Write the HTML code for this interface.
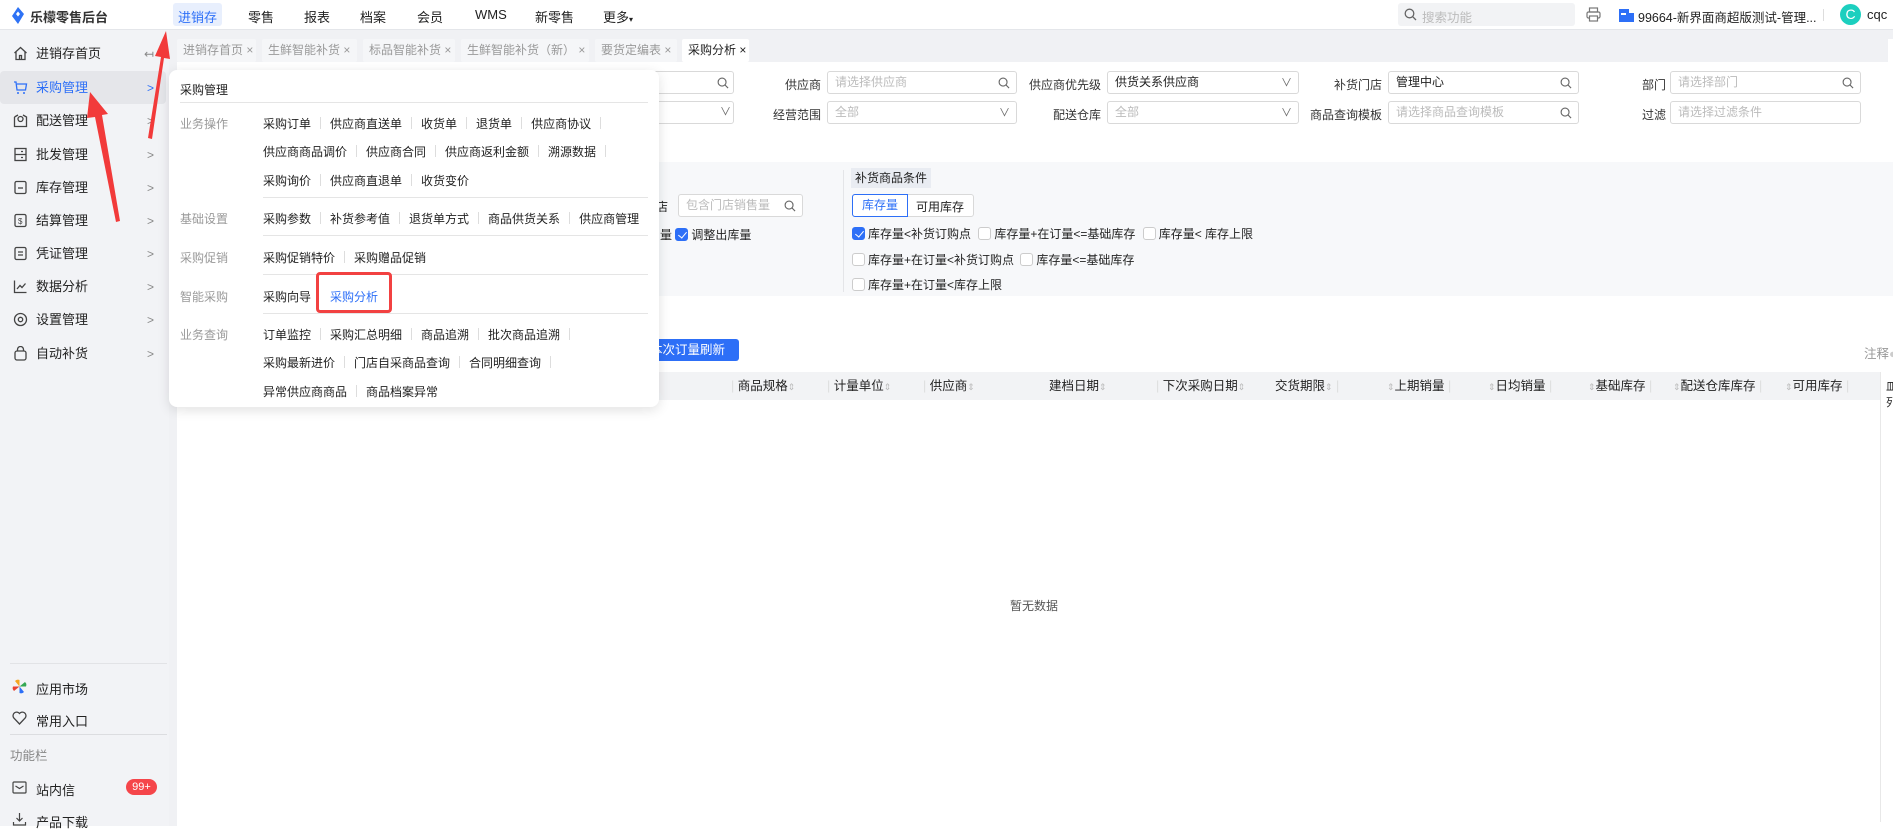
<!DOCTYPE html>
<html><head><meta charset="utf-8">
<style>
*{margin:0;padding:0;box-sizing:border-box}
body{width:1893px;height:826px;overflow:hidden;position:relative;background:#fff;font-family:"Liberation Sans","Noto Sans CJK SC",sans-serif;font-size:13px;color:#222}
.a{position:absolute;white-space:nowrap}
.hdr{left:0;top:0;width:1893px;height:30px;background:#fff;border-bottom:1px solid #e4e6ea}
.side{left:0;top:30px;width:169px;height:796px;background:#f2f3f6}
.si{left:0;width:169px;height:32px;line-height:32px}
.si .t{position:absolute;left:36px}
.si .ar{position:absolute;left:147px;color:#888;font-size:12px}
.ic{position:absolute;left:13px;top:8px;width:15px;height:15px}
.gray{left:169px;top:30px;width:1724px;height:796px;background:#f0f1f4}
.tab{top:39px;height:23px;line-height:23px;padding-left:6px;background:#f5f6f8;color:#999;font-size:12px;border-radius:2px}
.lbl{font-size:12px;color:#333;text-align:right}
.inp{height:23px;border:1px solid #d9d9d9;border-radius:3px;background:#fff;font-size:12px;color:#bbb;line-height:21px;padding-left:7px}
.inp.v{color:#222}
.mi{font-size:12px;color:#222}
.cat{font-size:12px;color:#999}
.sep{display:inline-block;width:1px;height:12px;background:#ddd;margin:0 9px;vertical-align:-1px}
.cb{display:inline-block;width:13px;height:13px;border:1px solid #ccc;border-radius:3px;background:#fff;vertical-align:-2px;margin-right:3px}
.cb.on{background:#2d6ff7;border-color:#2d6ff7;position:relative}
.cb.on:after{content:"";position:absolute;left:3.5px;top:0.5px;width:4px;height:7px;border:solid #fff;border-width:0 1.5px 1.5px 0;transform:rotate(40deg)}
.th{top:372px;height:28px;line-height:28px;font-size:12.5px;color:#222}
.srt{color:#bbb;font-size:9px}
</style></head><body>

<div class="a hdr"></div>
<svg class="a" style="left:11px;top:7px" width="14" height="17" viewBox="0 0 14 17"><path d="M7 0 L13 7 L9 7 L7 4.5 L5 7 L7 9.5 L9 7 L13 7 L7 17 L1 9 Z" fill="#2e72f5"/></svg>
<div class="a" style="left:30px;top:7px;font-size:13px;font-weight:bold;color:#333">乐檬零售后台</div>
<div class="a" style="left:173px;top:3px;width:49px;height:23px;background:#e8effd;border-radius:3px"></div>
<div class="a" style="left:178px;top:7px;color:#2d6ff7;font-size:13px">进销存</div>
<div class="a" style="left:248px;top:7px">零售</div>
<div class="a" style="left:304px;top:7px">报表</div>
<div class="a" style="left:360px;top:7px">档案</div>
<div class="a" style="left:417px;top:7px">会员</div>
<div class="a" style="left:475px;top:7px">WMS</div>
<div class="a" style="left:535px;top:7px">新零售</div>
<div class="a" style="left:603px;top:7px">更多<span style="font-size:8px">▾</span></div>

<div class="a" style="left:1398px;top:3px;width:177px;height:23px;background:#f2f3f5;border-radius:3px"></div>
<svg class="a" style="left:1404px;top:8px" width="13" height="13" viewBox="0 0 13 13"><circle cx="5.5" cy="5.5" r="4.3" fill="none" stroke="#666" stroke-width="1.3"/><path d="M8.7 8.7 L12 12" stroke="#666" stroke-width="1.3"/></svg>
<div class="a" style="left:1422px;top:7px;color:#bbb;font-size:12.5px">搜索功能</div>
<svg class="a" style="left:1586px;top:7px" width="15" height="15" viewBox="0 0 15 15"><rect x="3.5" y="1" width="8" height="4" fill="none" stroke="#777" stroke-width="1.2"/><rect x="1" y="5" width="13" height="6" rx="1.5" fill="none" stroke="#777" stroke-width="1.2"/><rect x="3.5" y="9" width="8" height="5" fill="#fff" stroke="#777" stroke-width="1.2"/></svg>
<svg class="a" style="left:1619px;top:9px" width="15" height="13" viewBox="0 0 15 13"><rect x="0" y="0" width="10" height="12" fill="#2d6ff7"/><rect x="10" y="4" width="5" height="8" fill="#2d6ff7"/><rect x="2" y="4" width="5" height="2" fill="#fff"/><rect x="0" y="11" width="15" height="2" fill="#2d6ff7"/></svg>
<div class="a" style="left:1638px;top:7px;font-size:12.5px">99664-新界面商超版测试-管理...</div>
<div class="a" style="left:1823px;top:9px;width:1px;height:12px;background:#ddd"></div>
<div class="a" style="left:1840px;top:4px;width:21px;height:21px;border-radius:50%;background:#1ccfbf;color:#fff;text-align:center;line-height:21px;font-size:14px">C</div>
<div class="a" style="left:1867px;top:7px;font-size:13px">cqc</div>

<div class="a gray"></div>
<div class="a side"></div>
<div class="a" style="left:0;top:71px;width:166px;height:33px;background:#e5e6ea;border-radius:4px"></div>

<div class="a si" style="top:38px"><svg class="ic" viewBox="0 0 15 15"><path d="M1.5 7 L7.5 1.5 L13.5 7 M3 5.8 V13.5 H12 V5.8 M6.5 13.5 V9.5 H8.5 V13.5" fill="none" stroke="#444" stroke-width="1.3"/></svg><span class="t">进销存首页</span><span class="ar" style="left:144px">↤</span></div>
<div class="a si" style="top:72px;color:#2d6ff7"><svg class="ic" viewBox="0 0 15 15"><path d="M1 2 H3 L4 10 H12.5 L13.5 4 H4" fill="none" stroke="#2d6ff7" stroke-width="1.3"/><circle cx="5" cy="13" r="1" fill="#2d6ff7"/><circle cx="11" cy="13" r="1" fill="#2d6ff7"/></svg><span class="t">采购管理</span><span class="ar" style="color:#2d6ff7">&gt;</span></div>
<div class="a si" style="top:105px"><svg class="ic" viewBox="0 0 15 15"><path d="M1.5 4 V13.5 H13.5 V4 L10 2 M5 2 L1.5 4" fill="none" stroke="#444" stroke-width="1.3"/><circle cx="7.5" cy="6" r="2.5" fill="none" stroke="#444" stroke-width="1.3"/></svg><span class="t">配送管理</span><span class="ar">&gt;</span></div>
<div class="a si" style="top:139px"><svg class="ic" viewBox="0 0 15 15"><rect x="2" y="1.5" width="11" height="12" fill="none" stroke="#444" stroke-width="1.3"/><path d="M2 7.5 H13 M8 4.5 H10 M8 10.5 H10" stroke="#444" stroke-width="1.3"/></svg><span class="t">批发管理</span><span class="ar">&gt;</span></div>
<div class="a si" style="top:172px"><svg class="ic" viewBox="0 0 15 15"><rect x="2" y="1.5" width="11" height="12" rx="1.5" fill="none" stroke="#444" stroke-width="1.3"/><path d="M5 8 H10" stroke="#444" stroke-width="1.3"/></svg><span class="t">库存管理</span><span class="ar">&gt;</span></div>
<div class="a si" style="top:205px"><svg class="ic" viewBox="0 0 15 15"><rect x="2" y="1.5" width="11" height="12" rx="1.5" fill="none" stroke="#444" stroke-width="1.3"/><text x="5" y="11" font-size="8" fill="#444">$</text></svg><span class="t">结算管理</span><span class="ar">&gt;</span></div>
<div class="a si" style="top:238px"><svg class="ic" viewBox="0 0 15 15"><rect x="2" y="1.5" width="11" height="12" rx="1.5" fill="none" stroke="#444" stroke-width="1.3"/><path d="M5 6 H10 M5 9 H10" stroke="#444" stroke-width="1.3"/></svg><span class="t">凭证管理</span><span class="ar">&gt;</span></div>
<div class="a si" style="top:271px"><svg class="ic" viewBox="0 0 15 15"><path d="M1.5 1.5 V13.5 H13.5 M4 10 L7 6.5 L9 8.5 L12.5 4.5" fill="none" stroke="#444" stroke-width="1.3"/></svg><span class="t">数据分析</span><span class="ar">&gt;</span></div>
<div class="a si" style="top:304px"><svg class="ic" viewBox="0 0 15 15"><circle cx="7.5" cy="7.5" r="6" fill="none" stroke="#444" stroke-width="1.3"/><circle cx="7.5" cy="7.5" r="2.2" fill="none" stroke="#444" stroke-width="1.3"/></svg><span class="t">设置管理</span><span class="ar">&gt;</span></div>
<div class="a si" style="top:338px"><svg class="ic" viewBox="0 0 15 15"><rect x="2" y="5" width="11" height="9" rx="2" fill="none" stroke="#444" stroke-width="1.3"/><path d="M4.5 5 V3.5 A3 3 0 0 1 10.5 3.5 V5" fill="none" stroke="#444" stroke-width="1.3"/></svg><span class="t">自动补货</span><span class="ar">&gt;</span></div>

<div class="a" style="left:10px;top:663px;width:157px;height:1px;background:#e2e3e6"></div>
<svg class="a" style="left:12px;top:679px" width="15" height="15" viewBox="0 0 15 15"><path d="M7.5 7.5 L3 2 A4 4 0 0 1 7.5 1 Z" fill="#f5a623"/><path d="M7.5 7.5 L13 3 A4 4 0 0 1 14 7.5 Z" fill="#34a853"/><path d="M7.5 7.5 L12 13 A4 4 0 0 1 7.5 14 Z" fill="#2d6ff7"/><path d="M7.5 7.5 L2 12 A4 4 0 0 1 1 7.5 Z" fill="#ea4335"/></svg>
<div class="a" style="left:36px;top:679px">应用市场</div>
<svg class="a" style="left:12px;top:711px" width="15" height="14" viewBox="0 0 15 14"><path d="M7.5 13 L1.8 7 A3.3 3.3 0 0 1 7.5 2.5 A3.3 3.3 0 0 1 13.2 7 Z" fill="none" stroke="#444" stroke-width="1.3"/></svg>
<div class="a" style="left:36px;top:711px">常用入口</div>
<div class="a" style="left:10px;top:734px;width:157px;height:1px;background:#dcdde0"></div>
<div class="a" style="left:10px;top:745px;color:#888;font-size:12.5px">功能栏</div>
<svg class="a" style="left:12px;top:781px" width="15" height="13" viewBox="0 0 15 13"><rect x="1" y="1" width="13" height="11" rx="1" fill="none" stroke="#444" stroke-width="1.2"/><path d="M3.5 5 L7.5 7.5 L11.5 5" fill="none" stroke="#444" stroke-width="1.2"/></svg>
<div class="a" style="left:36px;top:780px">站内信</div>
<div class="a" style="left:126px;top:779px;width:31px;height:16px;border-radius:8px;background:#f5454a;color:#fff;font-size:11px;text-align:center;line-height:16px">99+</div>
<svg class="a" style="left:12px;top:812px" width="15" height="14" viewBox="0 0 15 14"><path d="M7.5 1 V9 M4.5 6 L7.5 9 L10.5 6 M1.5 10 V13 H13.5 V10" fill="none" stroke="#444" stroke-width="1.2"/></svg>
<div class="a" style="left:36px;top:812px">产品下载</div>

<div class="a tab" style="left:177px;width:79px">进销存首页 ×</div>
<div class="a tab" style="left:262px;width:95px">生鲜智能补货 ×</div>
<div class="a tab" style="left:363px;width:92px">标品智能补货 ×</div>
<div class="a tab" style="left:461px;width:128px">生鲜智能补货（新） ×</div>
<div class="a tab" style="left:595px;width:82px">要货定编表 ×</div>
<div class="a tab" style="left:682px;width:67px;background:#fff;color:#222">采购分析 ×</div>
<div class="a" style="left:1888px;top:39px;width:5px;height:23px;background:#fff"></div>

<div class="a" style="left:177px;top:62px;width:1716px;height:764px;background:#fff"></div>

<div class="a inp" style="left:600px;top:71px;width:134px"></div>
<svg class="a" style="left:717px;top:77px" width="12" height="12" viewBox="0 0 13 13"><circle cx="5.5" cy="5.5" r="4.3" fill="none" stroke="#666" stroke-width="1.2"/><path d="M8.7 8.7 L12 12" stroke="#666" stroke-width="1.2"/></svg>
<div class="a inp" style="left:600px;top:101px;width:134px"></div>
<div class="a" style="left:720px;top:103px;color:#666;font-size:11px">∨</div>

<div class="a lbl" style="left:760px;top:76px;width:61px">供应商</div>
<div class="a inp" style="left:827px;top:71px;width:190px">请选择供应商</div>
<svg class="a" style="left:998px;top:77px" width="12" height="12" viewBox="0 0 13 13"><circle cx="5.5" cy="5.5" r="4.3" fill="none" stroke="#666" stroke-width="1.2"/><path d="M8.7 8.7 L12 12" stroke="#666" stroke-width="1.2"/></svg>
<div class="a lbl" style="left:1000px;top:76px;width:101px">供应商优先级</div>
<div class="a inp v" style="left:1107px;top:71px;width:192px">供货关系供应商</div>
<div class="a" style="left:1281px;top:74px;color:#666;font-size:11px">∨</div>
<div class="a lbl" style="left:1300px;top:76px;width:82px">补货门店</div>
<div class="a inp v" style="left:1388px;top:71px;width:191px">管理中心</div>
<svg class="a" style="left:1560px;top:77px" width="12" height="12" viewBox="0 0 13 13"><circle cx="5.5" cy="5.5" r="4.3" fill="none" stroke="#666" stroke-width="1.2"/><path d="M8.7 8.7 L12 12" stroke="#666" stroke-width="1.2"/></svg>
<div class="a lbl" style="left:1600px;top:76px;width:66px">部门</div>
<div class="a inp" style="left:1670px;top:71px;width:191px">请选择部门</div>
<svg class="a" style="left:1842px;top:77px" width="12" height="12" viewBox="0 0 13 13"><circle cx="5.5" cy="5.5" r="4.3" fill="none" stroke="#666" stroke-width="1.2"/><path d="M8.7 8.7 L12 12" stroke="#666" stroke-width="1.2"/></svg>

<div class="a lbl" style="left:760px;top:106px;width:61px">经营范围</div>
<div class="a inp" style="left:827px;top:101px;width:190px">全部</div>
<div class="a" style="left:999px;top:104px;color:#666;font-size:11px">∨</div>
<div class="a lbl" style="left:1000px;top:106px;width:101px">配送仓库</div>
<div class="a inp" style="left:1107px;top:101px;width:192px">全部</div>
<div class="a" style="left:1281px;top:104px;color:#666;font-size:11px">∨</div>
<div class="a lbl" style="left:1300px;top:106px;width:82px">商品查询模板</div>
<div class="a inp" style="left:1388px;top:101px;width:191px">请选择商品查询模板</div>
<svg class="a" style="left:1560px;top:107px" width="12" height="12" viewBox="0 0 13 13"><circle cx="5.5" cy="5.5" r="4.3" fill="none" stroke="#666" stroke-width="1.2"/><path d="M8.7 8.7 L12 12" stroke="#666" stroke-width="1.2"/></svg>
<div class="a lbl" style="left:1600px;top:106px;width:66px">过滤</div>
<div class="a inp" style="left:1670px;top:101px;width:191px">请选择过滤条件</div>

<div class="a" style="left:177px;top:162px;width:1716px;height:134px;background:#f7f8fa"></div>
<div class="a" style="left:843px;top:170px;width:1px;height:122px;background:#e4e5e8"></div>
<div class="a" style="left:851px;top:168px;height:20px;line-height:20px;padding:0 4px;background:#e9ecf2;font-size:12px">补货商品条件</div>
<div class="a" style="left:852px;top:194px;width:122px;height:23px;border:1px solid #d9d9d9;border-radius:3px;background:#fff"></div>
<div class="a" style="left:852px;top:194px;width:56px;height:23px;border:1px solid #2d6ff7;border-radius:3px 0 0 3px;color:#2d6ff7;text-align:center;line-height:21px;font-size:12px">库存量</div>
<div class="a" style="left:916px;top:198px;font-size:12px">可用库存</div>
<div class="a" style="left:852px;top:225px;font-size:12px"><span class="cb on"></span>库存量&lt;补货订购点 <span class="cb" style="margin-left:4px"></span>库存量+在订量&lt;=基础库存 <span class="cb" style="margin-left:4px"></span>库存量&lt; 库存上限</div>
<div class="a" style="left:852px;top:251px;font-size:12px"><span class="cb"></span>库存量+在订量&lt;补货订购点 <span class="cb" style="margin-left:3px"></span>库存量&lt;=基础库存</div>
<div class="a" style="left:852px;top:276px;font-size:12px"><span class="cb"></span>库存量+在订量&lt;库存上限</div>
<div class="a" style="left:656px;top:198px;font-size:12px">店</div>
<div class="a inp" style="left:678px;top:194px;width:125px">包含门店销售量</div>
<svg class="a" style="left:784px;top:200px" width="12" height="12" viewBox="0 0 13 13"><circle cx="5.5" cy="5.5" r="4.3" fill="none" stroke="#666" stroke-width="1.2"/><path d="M8.7 8.7 L12 12" stroke="#666" stroke-width="1.2"/></svg>
<div class="a" style="left:660px;top:226px;font-size:12px">量 <span class="cb on"></span>调整出库量</div>

<div class="a" style="left:640px;top:339px;width:99px;height:22px;background:#2d6ff7;border-radius:3px;color:#fff;font-size:12.5px;line-height:22px;padding-left:10px">本次订量刷新</div>
<div class="a" style="left:1864px;top:343px;color:#999;font-size:12.5px">注释<span style="color:#ccc">●</span></div>

<div class="a" style="left:177px;top:372px;width:1703px;height:28px;background:#f2f3f5"></div>
<div class="a" style="left:1880px;top:372px;width:13px;height:450px;border-left:1px solid #e8e8e8;background:#fff"></div>
<div class="a" style="left:1886px;top:378px;font-size:11px">皿<br>列</div>
<div class="a th" style="left:731px"><span style="color:#ddd">|</span> 商品规格<span class="srt">⇕</span></div>
<div class="a th" style="left:827px"><span style="color:#ddd">|</span> 计量单位<span class="srt">⇕</span></div>
<div class="a th" style="left:923px"><span style="color:#ddd">|</span> 供应商<span class="srt">⇕</span></div>
<div class="a th" style="left:1049px">建档日期<span class="srt">⇕</span></div>
<div class="a th" style="left:1156px"><span style="color:#ddd">|</span> 下次采购日期<span class="srt">⇕</span></div>
<div class="a th" style="left:1275px">交货期限<span class="srt">⇕</span> <span style="color:#ddd">|</span></div>
<div class="a th" style="left:1387px"><span class="srt">⇕</span>上期销量 <span style="color:#ddd">|</span></div>
<div class="a th" style="left:1488px"><span class="srt">⇕</span>日均销量 <span style="color:#ddd">|</span></div>
<div class="a th" style="left:1588px"><span class="srt">⇕</span>基础库存 <span style="color:#ddd">|</span></div>
<div class="a th" style="left:1673px"><span class="srt">⇕</span>配送仓库库存 <span style="color:#ddd">|</span></div>
<div class="a th" style="left:1785px"><span class="srt">⇕</span>可用库存 <span style="color:#ddd">|</span></div>
<div class="a" style="left:1010px;top:597px;color:#555;font-size:12px">暂无数据</div>

<div class="a" style="left:169px;top:70px;width:490px;height:337px;background:#fff;border-radius:8px;box-shadow:0 3px 12px rgba(0,0,0,.12)"></div>
<div class="a mi" style="left:180px;top:81px">采购管理</div>
<div class="a" style="left:180px;top:102px;width:468px;height:1px;background:#e5e5e5"></div>
<div class="a cat" style="left:180px;top:115px">业务操作</div>
<div class="a mi" style="left:263px;top:115px">采购订单<span class="sep"></span>供应商直送单<span class="sep"></span>收货单<span class="sep"></span>退货单<span class="sep"></span>供应商协议<span class="sep"></span></div>
<div class="a mi" style="left:263px;top:143px">供应商商品调价<span class="sep"></span>供应商合同<span class="sep"></span>供应商返利金额<span class="sep"></span>溯源数据<span class="sep"></span></div>
<div class="a mi" style="left:263px;top:172px">采购询价<span class="sep"></span>供应商直退单<span class="sep"></span>收货变价</div>
<div class="a" style="left:263px;top:197px;width:385px;height:1px;background:#e5e5e5"></div>
<div class="a cat" style="left:180px;top:210px">基础设置</div>
<div class="a mi" style="left:263px;top:210px">采购参数<span class="sep"></span>补货参考值<span class="sep"></span>退货单方式<span class="sep"></span>商品供货关系<span class="sep"></span>供应商管理</div>
<div class="a" style="left:263px;top:235px;width:385px;height:1px;background:#e5e5e5"></div>
<div class="a cat" style="left:180px;top:249px">采购促销</div>
<div class="a mi" style="left:263px;top:249px">采购促销特价<span class="sep"></span>采购赠品促销</div>
<div class="a" style="left:263px;top:274px;width:385px;height:1px;background:#e5e5e5"></div>
<div class="a cat" style="left:180px;top:288px">智能采购</div>
<div class="a mi" style="left:263px;top:288px">采购向导</div>
<div class="a" style="left:316px;top:272px;width:76px;height:41px;border:3px solid #f24141;border-radius:4px"></div>
<div class="a mi" style="left:330px;top:288px;color:#2d6ff7">采购分析</div>
<div class="a" style="left:263px;top:313px;width:385px;height:1px;background:#e5e5e5"></div>
<div class="a cat" style="left:180px;top:326px">业务查询</div>
<div class="a mi" style="left:263px;top:326px">订单监控<span class="sep"></span>采购汇总明细<span class="sep"></span>商品追溯<span class="sep"></span>批次商品追溯<span class="sep"></span></div>
<div class="a mi" style="left:263px;top:354px">采购最新进价<span class="sep"></span>门店自采商品查询<span class="sep"></span>合同明细查询<span class="sep"></span></div>
<div class="a mi" style="left:263px;top:383px">异常供应商商品<span class="sep"></span>商品档案异常</div>

<svg class="a" style="left:0;top:0" width="300" height="300" viewBox="0 0 300 300">
<polygon points="148,138 152,139 164,58 170,59 166,31 155,56 161,57" fill="#f23a3a"/>
<polygon points="116,222 120,221 102,115 108,114 90,92 87,118 95,117" fill="#f23a3a"/>
</svg>
</body></html>
